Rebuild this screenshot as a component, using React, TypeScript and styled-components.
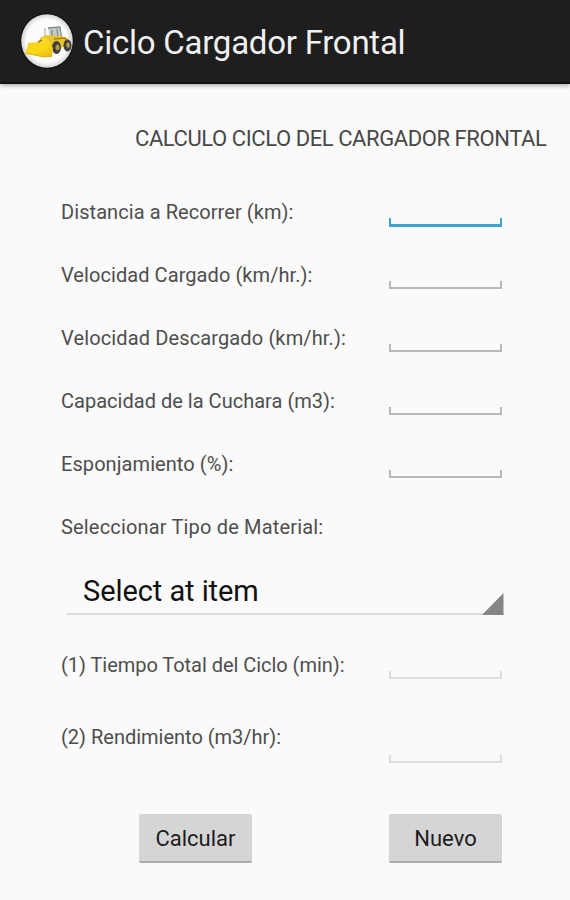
import React from 'react';
import styled, { createGlobalStyle } from 'styled-components';

const GlobalStyle = createGlobalStyle`
  *, *::after { box-sizing: border-box; }
  body { margin: 0; background: #fafafa; font-family: Roboto, sans-serif; }
`;

const Screen = styled.div`
  display: flex;
  flex-direction: column;
  width: 570px;
  height: 900px;
  overflow: hidden;
  background: #fafafa;
`;

const ActionBar = styled.header`
  display: flex;
  align-items: center;
  gap: 9px;
  height: 84px;
  flex: none;
  padding-left: 20px;
  background: #1e1e1e;
  border-bottom: 2px solid #111;
  box-shadow: 0 1px 5px rgba(0, 0, 0, 0.4);
`;

const AppTitle = styled.h1`
  margin: 4px 0 0;
  font-size: 33px;
  font-weight: 400;
  line-height: 40px;
  letter-spacing: -0.25px;
  color: #f0f0f0;
  white-space: nowrap;
`;

const Heading = styled.h2`
  margin: 41px 0 29px 135px;
  font-size: 22px;
  font-weight: 400;
  line-height: 27px;
  letter-spacing: -0.42px;
  color: #484848;
  white-space: nowrap;
`;

const Form = styled.main`
  display: flex;
  flex-direction: column;
`;

const Row = styled.div<{ $height?: number }>`
  display: grid;
  grid-template-columns: 328px 113px;
  height: ${(p) => p.$height ?? 63}px;
  padding-left: 61px;
`;

const Label = styled.label<{ $spacing?: number }>`
  padding-top: 18px;
  font-size: 20px;
  line-height: 26px;
  letter-spacing: ${(p) => p.$spacing ?? 0.07}px;
  color: #4e4e4e;
  white-space: nowrap;
`;

const tones = {
  focused: { color: '#3fa3cf', width: 3 },
  normal: { color: '#b8b8b8', width: 2 },
  disabled: { color: '#dddddd', width: 2 },
};

const Field = styled.div<{ $tone: keyof typeof tones; $bottom: number }>`
  display: flex;
  flex-direction: column;
  justify-content: flex-end;
  height: ${(p) => p.$bottom}px;

  &::after {
    content: '';
    height: ${(p) => (p.$tone === 'focused' ? 9 : 8)}px;
    border: solid ${(p) => tones[p.$tone].color};
    border-width: 0 2px ${(p) => tones[p.$tone].width}px;
  }
`;

const TextInput = styled.input`
  width: 100%;
  height: 30px;
  padding: 0 8px;
  border: 0;
  outline: 0;
  background: transparent;
  font: 20px Roboto, sans-serif;
`;

const Spinner = styled.div`
  display: flex;
  justify-content: space-between;
  align-items: flex-end;
  width: 437px;
  height: 56px;
  margin: 0 0 19px 67px;
  padding-left: 16px;
  border-bottom: 2px solid #dcdcdc;
`;

const SpinnerText = styled.span`
  margin-bottom: 4px;
  font-size: 29px;
  line-height: 36px;
  letter-spacing: -0.07px;
  color: #111;
  white-space: nowrap;
`;

const SpinnerCorner = styled.svg`
  display: block;
  width: 22px;
  height: 22px;
  margin-bottom: -2px;
`;

const Buttons = styled.div`
  display: flex;
  gap: 137px;
  padding-left: 139px;
`;

const Button = styled.button`
  width: 113px;
  height: 49px;
  padding: 2px 0 0;
  border: 0;
  border-bottom: 2px solid #ababab;
  border-radius: 2px;
  background: #d5d5d5;
  font: 22px/26px Roboto, sans-serif;
  color: #1c1c1c;
`;

const Logo = styled.svg`
  display: block;
  width: 54px;
  height: 56px;
  flex: none;
`;

const LoaderLogo = () => (
  <Logo viewBox="20 13 54 56">
    <defs>
      <radialGradient id="disc">
        <stop offset="0.8" stopColor="#fcfcfc" />
        <stop offset="1" stopColor="#d2d2d2" />
      </radialGradient>
      <linearGradient id="bucket" x2="1" y2="1">
        <stop stopColor="#f2cf25" />
        <stop offset="0.5" stopColor="#fbd914" />
        <stop offset="1" stopColor="#e1b71e" />
      </linearGradient>
    </defs>
    <ellipse cx="47" cy="41" rx="26.8" ry="27.8" fill="#0d0d0d" />
    <ellipse cx="47" cy="41" rx="25.8" ry="26.8" fill="url(#disc)" />
    <path d="M48 28 L59.5 27 L61 37 L50 38Z" fill="#c3cbca" />
    <path d="M48 28 L60 27 L61.5 37" fill="none" stroke="#858b83" strokeWidth="1.3" />
    <path d="M52 30v7M57 29l1 8" stroke="#798780" strokeWidth="1.2" />
    <path d="M45 28v8" stroke="#a1a59d" />
    <path d="M40 38 L46 35 L61 36 L69 39 L69 45 L57 49 L42 46Z" fill="#e9c42c" />
    <path d="M54 39l11-1 3 4" stroke="#a5821b" strokeWidth="1.3" fill="none" />
    <ellipse cx="56.5" cy="47.5" rx="4.5" ry="6.5" fill="#3e3b38" />
    <ellipse cx="57.5" cy="47.5" rx="2" ry="3" fill="#ad974a" />
    <ellipse cx="67.5" cy="45.5" rx="4" ry="6" fill="#45413e" />
    <ellipse cx="68" cy="45" rx="1.7" ry="2.7" fill="#baa052" />
    <path d="M28 43 L39 42 L50 44 L53 48 L52 57 L44 57 L25 53 L27 49Z" fill="url(#bucket)" />
    <path d="M25 53 L44 57 L51 56" fill="none" stroke="#d7ae16" />
    <path d="M37 43 L42 38 L46 38 L51 43" fill="#f7d92b" />
    <path d="M38 42l4-2" stroke="#8b7931" strokeWidth="1.4" />
  </Logo>
);

type Entry = {
  id: string;
  label: string;
  tone: keyof typeof tones;
  bottom: number;
  height?: number;
  spacing?: number;
};

const inputs: Entry[] = [
  { id: 'distancia', label: 'Distancia a Recorrer (km):', tone: 'focused', bottom: 46 },
  { id: 'cargado', label: 'Velocidad Cargado (km/hr.):', tone: 'normal', bottom: 45 },
  { id: 'descargado', label: 'Velocidad Descargado (km/hr.):', tone: 'normal', bottom: 45, spacing: 0.13 },
  { id: 'capacidad', label: 'Capacidad de la Cuchara (m3):', tone: 'normal', bottom: 45, spacing: 0.02 },
  { id: 'esponjamiento', label: 'Esponjamiento (%):', tone: 'normal', bottom: 45 },
];

const results: Entry[] = [
  { id: 'tiempo', label: '(1) Tiempo Total del Ciclo (min):', tone: 'disabled', bottom: 45, height: 72, spacing: -0.04 },
  { id: 'rendimiento', label: '(2) Rendimiento (m3/hr):', tone: 'disabled', bottom: 57, height: 108, spacing: -0.01 },
];

const Entries = ({ items }: { items: Entry[] }) => (
  <>
    {items.map((e) => (
      <Row key={e.id} $height={e.height}>
        <Label htmlFor={e.id} $spacing={e.spacing}>{e.label}</Label>
        <Field $tone={e.tone} $bottom={e.bottom}>
          <TextInput id={e.id} disabled={e.tone === 'disabled'} />
        </Field>
      </Row>
    ))}
  </>
);

export default function App() {
  return (
    <>
      <GlobalStyle />
      <Screen>
        <ActionBar>
          <LoaderLogo />
          <AppTitle>Ciclo Cargador Frontal</AppTitle>
        </ActionBar>
        <Heading>CALCULO CICLO DEL CARGADOR FRONTAL</Heading>
        <Form>
          <Entries items={inputs} />
          <Row>
            <Label $spacing={0.17}>Seleccionar Tipo de Material:</Label>
          </Row>
          <Spinner>
            <SpinnerText>Select at item</SpinnerText>
            <SpinnerCorner viewBox="0 0 22 22">
              <path d="M0 22 L21.5 0 V22Z" fill="#858585" />
            </SpinnerCorner>
          </Spinner>
          <Entries items={results} />
          <Buttons>
            <Button>Calcular</Button>
            <Button>Nuevo</Button>
          </Buttons>
        </Form>
      </Screen>
    </>
  );
}
